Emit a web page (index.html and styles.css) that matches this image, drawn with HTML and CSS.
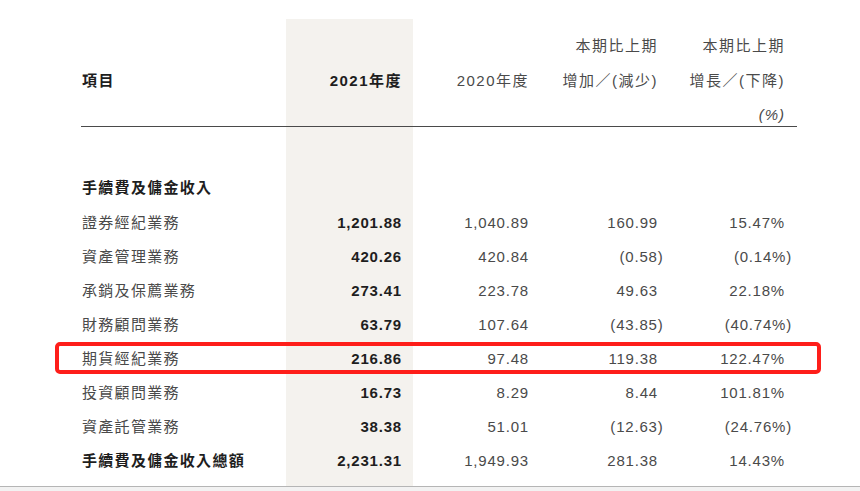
FILE: index.html
```html
<!DOCTYPE html>
<html lang="zh-Hant">
<head>
<meta charset="utf-8">
<link rel="stylesheet" href="styles.css">
</head>
<body>
<div class="page">
  <table class="fin">
    <colgroup>
      <col class="c-label">
      <col class="c-cur">
      <col class="c-prev">
      <col class="c-chg">
      <col class="c-pct">
    </colgroup>
    <thead>
      <tr>
        <th class="label"><div class="h1"></div><div class="h2 strong">項目</div><div class="h3"></div></th>
        <th class="cur"><div class="h1"></div><div class="h2 strong">2021年度</div><div class="h3"></div></th>
        <th><div class="h1"></div><div class="h2">2020年度</div><div class="h3"></div></th>
        <th><div class="h1">本期比上期</div><div class="h2">增加／(減少)</div><div class="h3"></div></th>
        <th><div class="h1">本期比上期</div><div class="h2">增長／(下降)</div><div class="h3"><i>(%)</i></div></th>
      </tr>
    </thead>
    <tbody>
      <tr class="section">
        <td class="label strong">手續費及傭金收入</td>
        <td class="cur"></td><td></td><td></td><td></td>
      </tr>
      <tr>
        <td class="label">證券經紀業務</td>
        <td class="cur num strong">1,201.88</td>
        <td class="num">1,040.89</td>
        <td class="num">160.99</td>
        <td class="num">15.47%</td>
      </tr>
      <tr>
        <td class="label">資產管理業務</td>
        <td class="cur num strong">420.26</td>
        <td class="num">420.84</td>
        <td class="num"><span class="neg">(0.58)</span></td>
        <td class="num"><span class="negp">(0.14%)</span></td>
      </tr>
      <tr>
        <td class="label">承銷及保薦業務</td>
        <td class="cur num strong">273.41</td>
        <td class="num">223.78</td>
        <td class="num">49.63</td>
        <td class="num">22.18%</td>
      </tr>
      <tr>
        <td class="label">財務顧問業務</td>
        <td class="cur num strong">63.79</td>
        <td class="num">107.64</td>
        <td class="num"><span class="neg">(43.85)</span></td>
        <td class="num"><span class="negp">(40.74%)</span></td>
      </tr>
      <tr class="marked">
        <td class="label"><span class="highlight"></span>期貨經紀業務</td>
        <td class="cur num strong">216.86</td>
        <td class="num">97.48</td>
        <td class="num">119.38</td>
        <td class="num">122.47%</td>
      </tr>
      <tr>
        <td class="label">投資顧問業務</td>
        <td class="cur num strong">16.73</td>
        <td class="num">8.29</td>
        <td class="num">8.44</td>
        <td class="num">101.81%</td>
      </tr>
      <tr>
        <td class="label">資產託管業務</td>
        <td class="cur num strong">38.38</td>
        <td class="num">51.01</td>
        <td class="num"><span class="neg">(12.63)</span></td>
        <td class="num"><span class="negp">(24.76%)</span></td>
      </tr>
      <tr>
        <td class="label strong">手續費及傭金收入總額</td>
        <td class="cur num strong">2,231.31</td>
        <td class="num">1,949.93</td>
        <td class="num">281.38</td>
        <td class="num">14.43%</td>
      </tr>
      <tr class="spacer">
        <td></td><td class="cur"></td><td></td><td></td><td></td>
      </tr>
    </tbody>
  </table>
</div>
<div class="bottom-bar"></div>
</body>
</html>
```

FILE: styles.css
```css
html, body {
  margin: 0;
  padding: 0;
  background: #ffffff;
}

body {
  font-family: "Liberation Sans", "Noto Sans CJK TC", sans-serif;
  font-size: 15px;
  color: #4a4a4a;
  width: 860px;
  height: 491px;
  overflow: hidden;
}

.page {
  padding: 19px 0 0 81px;
}

.fin {
  border-collapse: collapse;
  border-spacing: 0;
  table-layout: fixed;
  width: 716px;
}

.c-label { width: 205px; }
.c-cur { width: 127px; }
.c-prev { width: 128px; }
.c-chg { width: 129px; }
.c-pct { width: 127px; }

.fin th,
.fin td {
  padding: 0 12px 0 0;
  text-align: right;
  white-space: nowrap;
  font-weight: normal;
}

.fin .label {
  text-align: left;
  padding: 0 0 0 1px;
}

.fin .cur {
  background: #f4f2ee;
  padding-right: 11px;
}

.fin th {
  vertical-align: top;
  padding-top: 9px;
  border-bottom: 1px solid #4a4a4a;
  letter-spacing: 1.5px;
  color: #4a4a4a;
}

.fin th.label {
  padding-top: 9px;
}

.h1, .h2 {
  height: 35px;
  line-height: 35px;
}

.h3 {
  height: 22px;
  padding-top: 6px;
  line-height: 22px;
}

.h3 i {
  font-style: italic;
  letter-spacing: 1px;
}

.fin .strong {
  font-weight: bold;
  color: #1e1e1e;
}

.fin td {
  height: 34px;
  line-height: 34px;
  letter-spacing: 1.3px;
}

.fin td.num {
  letter-spacing: 0.8px;
}

.fin tr.section td {
  padding-top: 43px;
  height: 36px;
  line-height: 36px;
}

.fin tr.spacer td {
  height: 8px;
  line-height: 8px;
}

.neg {
  margin-right: -5.5px;
}

.negp {
  margin-right: -7px;
}

.fin tr.marked td.label {
  position: relative;
}

.highlight {
  position: absolute;
  left: -26px;
  top: 0;
  width: 766px;
  height: 32px;
  box-sizing: border-box;
  border: 4px solid #fe1e1a;
  border-radius: 5px;
}

.bottom-bar {
  border-top: 1px solid #b5b5b5;
  height: 10px;
  background: #f2f2f2;
}
```
